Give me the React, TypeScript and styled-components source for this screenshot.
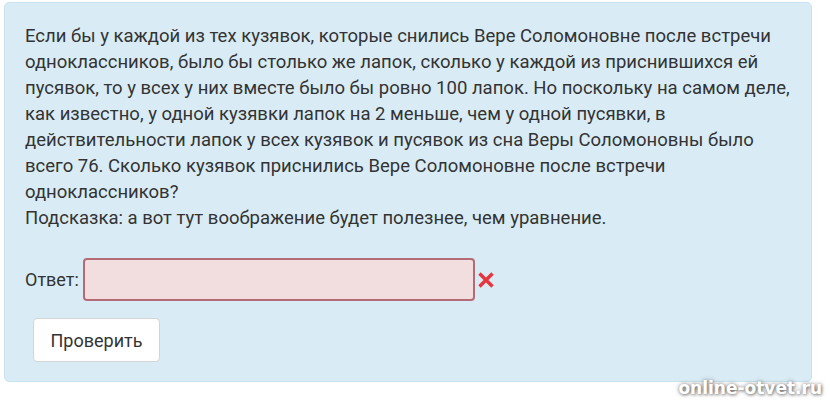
import React from "react";
import styled, { createGlobalStyle } from "styled-components";

const Global = createGlobalStyle`
  html, body { margin: 0; padding: 0; background: #ffffff; }
  body { font-family: Roboto, "Noto Sans", Arial, sans-serif; }
`;

const Page = styled.div`
  position: relative;
  width: 830px;
  height: 400px;
  padding: 2px 18px 0 4px;
  box-sizing: border-box;
  overflow: hidden;
`;

const Panel = styled.div`
  width: 808px;
  height: 380px;
  box-sizing: border-box;
  background: #d9ecf6;
  border: 1px solid #c9e2ef;
  border-radius: 5px;
  padding: 20px 20px 0 20px;
  color: #333333;
`;

const Question = styled.div`
  font-size: 18.5px;
  line-height: 26px;
`;

const Line = styled.div`
  white-space: nowrap;
`;

const AnswerRow = styled.div`
  display: flex;
  align-items: center;
  margin-top: 27px;
  gap: 4px;
`;

const Label = styled.span`
  font-size: 18px;
  color: #333333;
`;

const Input = styled.input`
  width: 392px;
  height: 43px;
  box-sizing: border-box;
  background: #f2dede;
  border: 2px solid #b36b75;
  border-radius: 4px;
  outline: none;
`;

const Cross = styled.svg`
  width: 18px;
  height: 18px;
  margin-left: -2px;
`;

const Button = styled.button`
  margin-top: 17px;
  margin-left: 8px;
  width: 127px;
  height: 44px;
  background: #ffffff;
  border: 1px solid #d4d4d4;
  border-radius: 4px;
  font-family: Roboto, Arial, sans-serif;
  font-size: 18px;
  color: #333333;
`;

const Watermark = styled.div`
  position: absolute;
  right: 8px;
  bottom: 2px;
  font-family: "DejaVu Sans", Arial, sans-serif;
  font-weight: bold;
  font-size: 17px;
  color: #ffffff;
  text-shadow: 0 0 4px rgba(0,0,0,0.5), 1px 1px 3px rgba(0,0,0,0.35);
`;

const lines = [
  "Если бы у каждой из тех кузявок, которые снились Вере Соломоновне после встречи",
  "одноклассников, было бы столько же лапок, сколько у каждой из приснившихся ей",
  "пусявок, то у всех у них вместе было бы ровно 100 лапок. Но поскольку на самом деле,",
  "как известно, у одной кузявки лапок на 2 меньше, чем у одной пусявки, в",
  "действительности лапок у всех кузявок и пусявок из сна Веры Соломоновны было",
  "всего 76. Сколько кузявок приснились Вере Соломоновне после встречи",
  "одноклассников?",
  "Подсказка: а вот тут воображение будет полезнее, чем уравнение.",
];

export default function App() {
  return (
    <>
      <Global />
      <Page>
        <Panel>
          <Question>
            {lines.map((l, i) => (
              <Line key={i}>{l}</Line>
            ))}
          </Question>
          <AnswerRow>
            <Label>Ответ:</Label>
            <Input />
            <Cross viewBox="0 0 18 18">
              <path d="M2.5 2.5 L15.5 15.5 M15.5 2.5 L2.5 15.5" stroke="#e8353b" strokeWidth="3.4" strokeLinecap="butt" />
            </Cross>
          </AnswerRow>
          <Button>Проверить</Button>
        </Panel>
        <Watermark>online-otvet.ru</Watermark>
      </Page>
    </>
  );
}
